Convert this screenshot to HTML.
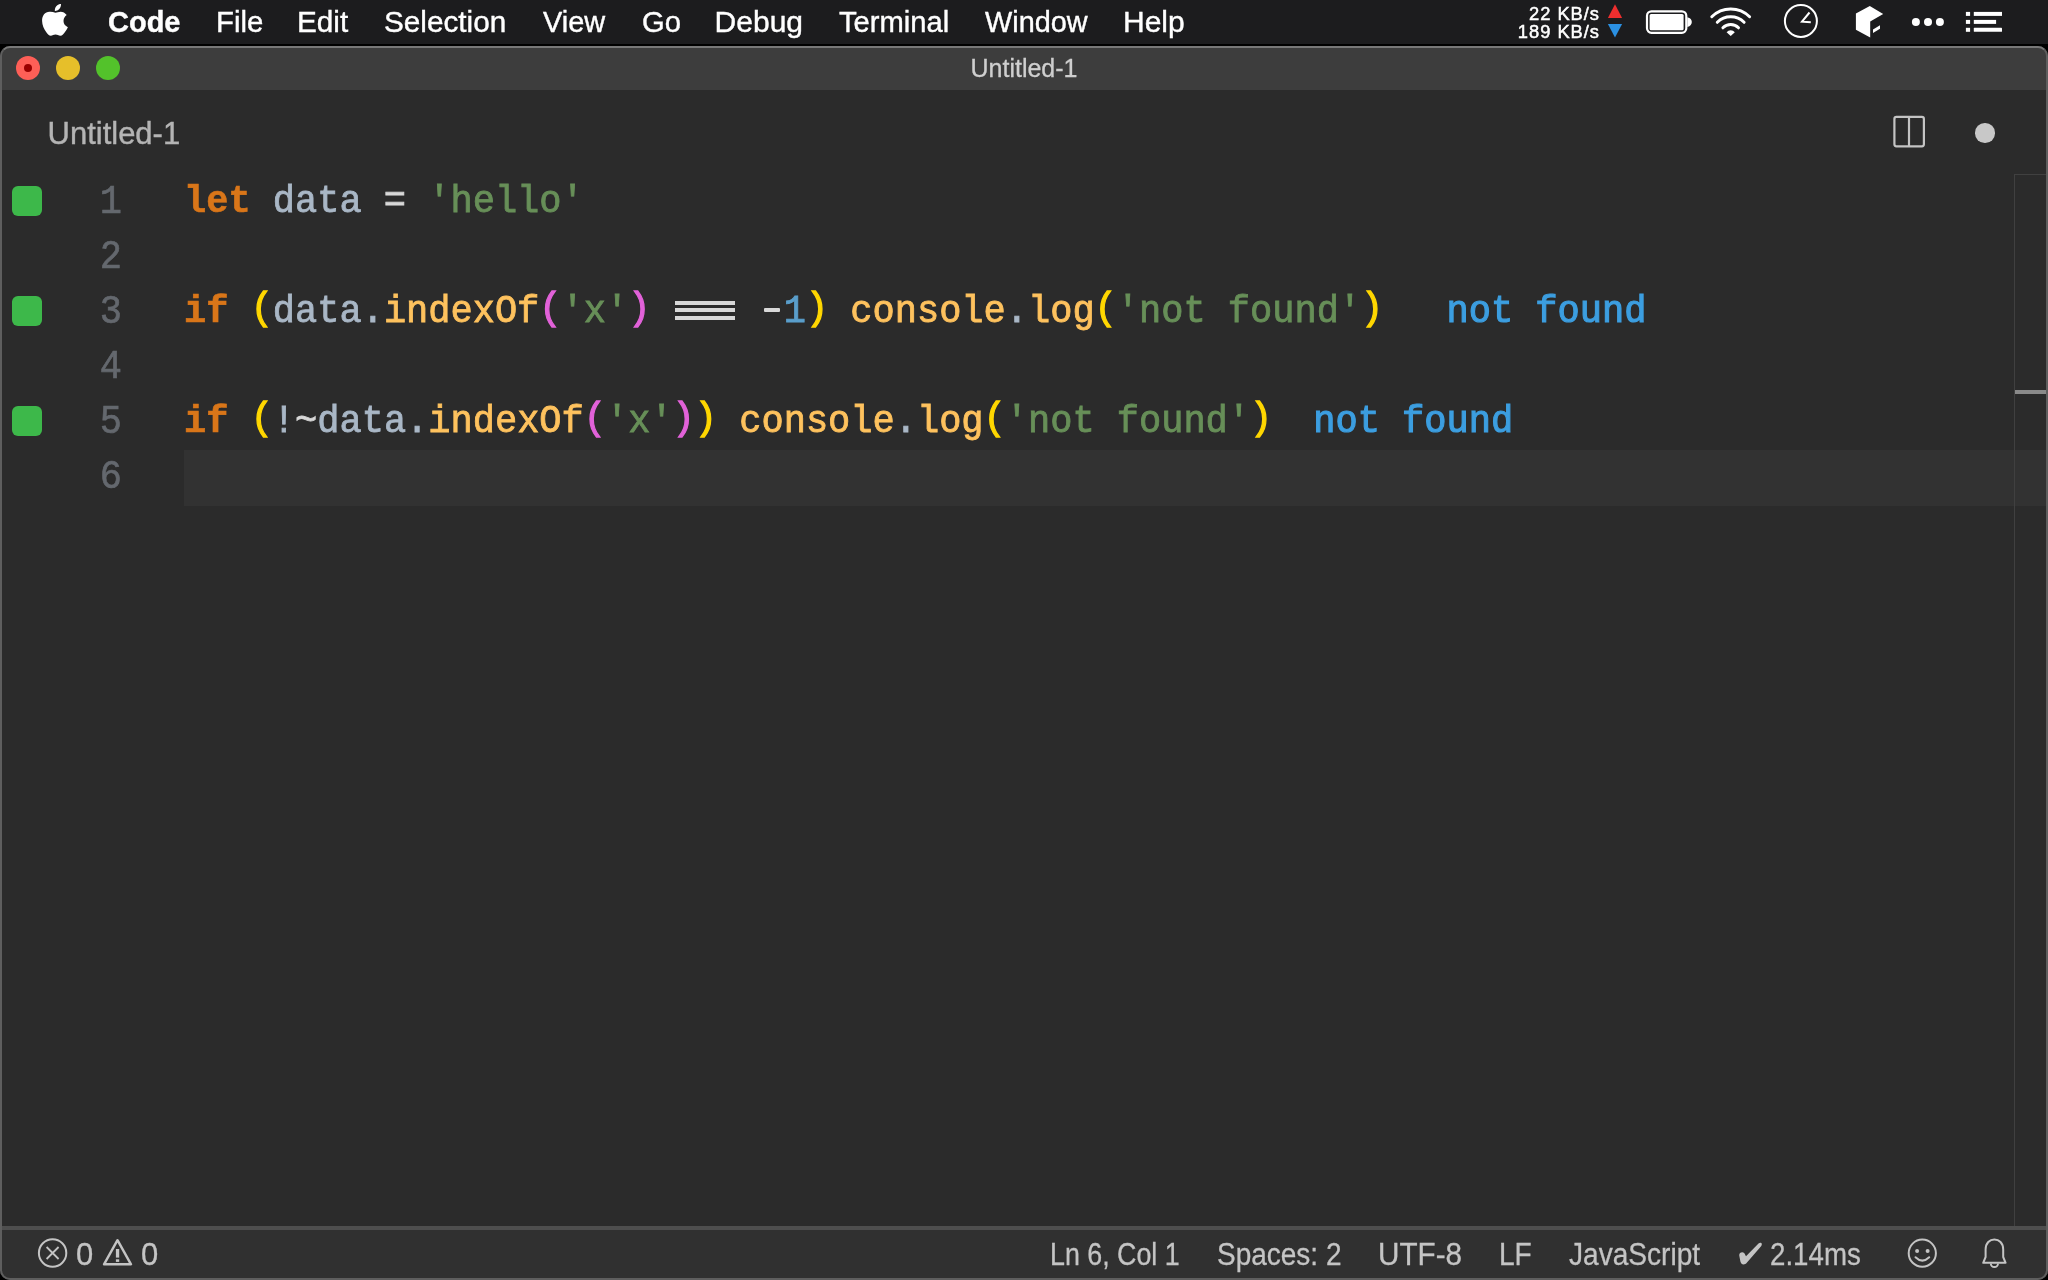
<!DOCTYPE html>
<html><head><meta charset="utf-8">
<style>
html,body{margin:0;padding:0;width:2048px;height:1280px;overflow:hidden;background:#000;}
*{box-sizing:border-box;}
#menubar,#win{will-change:transform;}
svg{position:absolute;overflow:visible;}
#menubar{position:absolute;left:0;top:0;width:2048px;height:44px;background:#1c1c1e;font-family:"Liberation Sans",sans-serif;color:#fff;}
.mi{position:absolute;top:0;height:44px;line-height:44px;font-size:30px;-webkit-text-stroke:0.4px currentColor;white-space:nowrap;transform-origin:0 0;}
.kb{position:absolute;font-size:18.3px;line-height:18px;height:18px;white-space:nowrap;text-align:right;width:91px;letter-spacing:1px;-webkit-text-stroke:0.5px currentColor;}
#win{position:absolute;left:0;top:46px;width:2048px;height:1234px;background:#2b2b2b;border-radius:10px;overflow:hidden;}
#frame{position:absolute;left:0;top:46px;width:2048px;height:1234px;border:2px solid #5e5e5e;border-top-color:#787878;border-radius:10px;}
#titlebar{position:absolute;left:0;top:0;width:2048px;height:44px;background:#3d3d3d;}
.light{position:absolute;width:24px;height:24px;border-radius:50%;top:10px;}
#title{position:absolute;left:0;width:2048px;top:0;height:44px;line-height:44px;text-align:center;font-family:"Liberation Sans",sans-serif;font-size:25px;color:#cfcfcf;-webkit-text-stroke:0.3px currentColor;}
#tab{position:absolute;left:47.5px;top:63px;font-family:"Liberation Sans",sans-serif;font-size:31px;color:#b4b4b4;-webkit-text-stroke:0.4px currentColor;line-height:50px;white-space:nowrap;transform-origin:0 0;}
.code{position:absolute;left:184px;font-family:"Liberation Mono",monospace;font-size:37px;line-height:55px;height:55px;white-space:pre;color:#a9b7c6;-webkit-text-stroke:0.8px currentColor;transform:scaleY(1.06);transform-origin:0 37px;}
.ln{position:absolute;left:60px;width:62px;text-align:right;font-family:"Liberation Mono",monospace;font-size:37px;line-height:55px;height:55px;color:#64686e;-webkit-text-stroke:0.6px currentColor;transform:translateY(1px) scaleY(1.1);transform-origin:0 37px;}
.gs{position:absolute;left:12px;width:30px;height:30px;border-radius:6px;background:#3db84a;}
.kw{color:#d97619;font-weight:bold;-webkit-text-stroke:0.6px currentColor;}
.fn{color:#fec25e;}
.st{color:#678f58;}
.nu{color:#5a9ecb;}
.b1{color:#ffd700;position:relative;top:-2.8px;-webkit-text-stroke:1.2px currentColor;}
.b2{color:#e262d9;position:relative;top:-2.8px;-webkit-text-stroke:1.2px currentColor;}
.op{color:#d8d8d8;}
.res{color:#3c9ee0;position:relative;left:-3.4px;-webkit-text-stroke:1.1px currentColor;}
.lig{color:transparent;-webkit-text-stroke:0 transparent;}
#curline{position:absolute;left:184px;top:404px;width:1864px;height:56px;background:#323232;}
#status{position:absolute;left:0;top:1180px;width:2048px;height:54px;background:#303030;border-top:4px solid #4e4e4e;font-family:"Liberation Sans",sans-serif;color:#c4c4c4;}
.si{position:absolute;top:0;height:50px;line-height:50px;font-size:31px;-webkit-text-stroke:0.3px currentColor;white-space:nowrap;transform-origin:0 0;}
</style></head><body>
<div id="menubar">
  <svg width="40" height="40" style="left:36px;top:0;" viewBox="0 0 40 40"><path fill="#fff" d="M19.4 12.8C17.5 12.0 15.5 11.7 13.5 11.8C9 12 6 15.5 6.1 21C6.2 25 7.8 29 10.5 32.5C11.8 34.3 13 35.8 14.8 35.8C16.5 35.8 17.5 34.6 19.5 34.6C21.5 34.6 22.5 35.8 24.3 35.8C26.3 35.8 27.8 33.8 29 32C30.3 30 31.3 28.5 31.9 27.2C29.2 26 27.5 23.8 27.5 21C27.5 18.3 29 16.3 30.7 15.1C29.2 13 26.8 11.8 24.6 11.8C22.6 11.8 21 12.6 19.4 12.8Z M18.8 10.9C18.7 8.3 19.8 6.5 21.3 5.3C22.4 4.4 23.8 3.9 25 3.9C25.1 6.1 24.3 8 23 9.3C21.8 10.5 20.3 11 18.8 10.9Z"/></svg>
  <div class="mi" style="left:108px;transform:scaleX(0.966);font-weight:bold;">Code</div>
  <div class="mi" style="left:215.5px;transform:scaleX(0.978);">File</div>
  <div class="mi" style="left:296.8px;transform:scaleX(0.99);">Edit</div>
  <div class="mi" style="left:384px;transform:scaleX(0.99);">Selection</div>
  <div class="mi" style="left:543px;transform:scaleX(0.964);">View</div>
  <div class="mi" style="left:642px;transform:scaleX(0.973);">Go</div>
  <div class="mi" style="left:714.6px;transform:scaleX(1.0);">Debug</div>
  <div class="mi" style="left:839px;transform:scaleX(0.973);">Terminal</div>
  <div class="mi" style="left:985px;transform:scaleX(0.962);">Window</div>
  <div class="mi" style="left:1123px;transform:scaleX(1.0);">Help</div>

  <div class="kb" style="left:1509px;top:5px;">22 KB/s</div>
  <div class="kb" style="left:1509px;top:23px;">189 KB/s</div>
  <svg width="20" height="44" style="left:1605px;top:0;" viewBox="0 0 20 44">
    <path fill="#ee2e2e" d="M10 4.2L17.1 18.1H2.9Z"/>
    <path fill="#2b90e2" d="M2.9 23.9H17.1L10 37.6Z"/>
  </svg>
  <svg width="50" height="44" style="left:1644px;top:0;" viewBox="0 0 50 44">
    <rect x="3" y="11.3" width="39.3" height="21.5" rx="4.5" fill="none" stroke="#fff" stroke-width="2.2"/>
    <rect x="5.6" y="13.9" width="34" height="16.3" rx="1.5" fill="#fff"/>
    <path fill="#fff" d="M43.3 17.2C46.5 17.8 47.8 19.8 47.8 22C47.8 24.2 46.5 26.3 43.3 26.9Z"/>
  </svg>
  <svg width="50" height="44" style="left:1705px;top:0;" viewBox="0 0 50 44">
    <g fill="none" stroke="#fff" stroke-width="3" stroke-linecap="round">
      <path d="M6.8 16.7A27 27 0 0 1 44.6 16.7"/>
      <path d="M12.3 22.3A19 19 0 0 1 39.1 22.3"/>
      <path d="M17.9 27.8A11 11 0 0 1 33.5 27.8"/>
    </g>
    <path fill="#fff" d="M21.6 32.3A5.2 5.2 0 0 1 29.8 32.3L25.7 35.9Z"/>
  </svg>
  <svg width="44" height="44" style="left:1779px;top:0;" viewBox="0 0 44 44">
    <circle cx="21.9" cy="21" r="16" fill="none" stroke="#fff" stroke-width="2"/>
    <path d="M30.5 12.5L23 21.7L31.8 22.2" fill="none" stroke="#fff" stroke-width="2"/>
  </svg>
  <svg width="44" height="44" style="left:1850px;top:0;" viewBox="0 0 44 44">
    <path fill="#fff" d="M19.8 6L33.2 13.9L20.2 21.6V37.6L5.9 29.7V13.5Z"/>
    <path fill="#fff" d="M23 29.4L30 25.2V28.8L23 32.9Z"/>
  </svg>
  <svg width="44" height="44" style="left:1904px;top:0;" viewBox="0 0 44 44">
    <circle cx="11.9" cy="22" r="4" fill="#fff"/><circle cx="24" cy="22" r="4" fill="#fff"/><circle cx="35.9" cy="22" r="4" fill="#fff"/>
  </svg>
  <svg width="44" height="44" style="left:1960px;top:0;" viewBox="0 0 44 44">
    <g fill="#fff">
    <rect x="5.9" y="11.9" width="4.2" height="4"/><rect x="5.9" y="19.9" width="4.2" height="4"/><rect x="5.9" y="27.8" width="4.2" height="4"/>
    <rect x="13.8" y="11.9" width="28.2" height="4"/><rect x="13.8" y="19.9" width="22.3" height="4"/><rect x="13.8" y="27.8" width="28.2" height="4" rx="0.6"/>
    </g>
  </svg>
</div>
<div id="win">
  <div id="titlebar">
    <div class="light" style="left:16px;background:#fe5f57;"><div style="position:absolute;left:8px;top:8px;width:8px;height:8px;border-radius:50%;background:#990000;"></div></div>
    <div class="light" style="left:56px;background:#e6bf2a;"></div>
    <div class="light" style="left:96px;background:#53c22b;"></div>
    <div id="title">Untitled-1</div>
  </div>
  <div id="tab">Untitled-1</div>
  <svg width="40" height="40" style="left:1890px;top:66px;" viewBox="0 0 40 40">
    <rect x="4.4" y="4.9" width="29.5" height="29.4" rx="2" fill="none" stroke="#c4c4c4" stroke-width="2.2"/>
    <path d="M19 4.9V34.3" stroke="#c4c4c4" stroke-width="2.2"/>
  </svg>
  <div style="position:absolute;left:1975px;top:77px;width:19.5px;height:19.5px;border-radius:50%;background:#c8c8c8;"></div>

  <div id="curline"></div>
  <div style="position:absolute;left:675px;top:255px;width:60px;height:4px;background:#d8d8d8;"></div>
  <div style="position:absolute;left:675px;top:262px;width:60px;height:4px;background:#d8d8d8;"></div>
  <div style="position:absolute;left:675px;top:269.5px;width:60px;height:4px;background:#d8d8d8;"></div>
  <div style="position:absolute;left:763.5px;top:262px;width:16.3px;height:4.2px;background:#d8d8d8;border-radius:1px;"></div>
  <div style="position:absolute;left:2014px;top:128px;width:1px;height:1052px;background:#404040;"></div>
  <div style="position:absolute;left:2014px;top:128px;width:34px;height:1px;background:#404040;"></div>
  <div style="position:absolute;left:2015px;top:344px;width:33px;height:4px;background:#8a8a8a;"></div>

  <div class="gs" style="top:140px;"></div>
  <div class="gs" style="top:250px;"></div>
  <div class="gs" style="top:360px;"></div>
  <div class="ln" style="top:129px;">1</div>
  <div class="ln" style="top:184px;">2</div>
  <div class="ln" style="top:239px;">3</div>
  <div class="ln" style="top:294px;">4</div>
  <div class="ln" style="top:349px;">5</div>
  <div class="ln" style="top:404px;">6</div>

  <div class="code" style="top:129px;"><span class="kw">let</span> data <span class="op">=</span> <span class="st">'hello'</span></div>
  <div class="code" style="top:239px;"><span class="kw">if</span> <span class="b1">(</span>data.<span class="fn">indexOf</span><span class="b2">(</span><span class="st">'x'</span><span class="b2">)</span> <span class="lig">===</span> <span class="lig">-</span><span class="nu">1</span><span class="b1">)</span> <span class="fn">console</span>.<span class="fn">log</span><span class="b1">(</span><span class="st">'not found'</span><span class="b1">)</span>   <span class="res">not found</span></div>
  <div class="code" style="top:349px;"><span class="kw">if</span> <span class="b1">(</span>!<span class="op">~</span>data.<span class="fn">indexOf</span><span class="b2">(</span><span class="st">'x'</span><span class="b2">)</span><span class="b1">)</span> <span class="fn">console</span>.<span class="fn">log</span><span class="b1">(</span><span class="st">'not found'</span><span class="b1">)</span>  <span class="res">not found</span></div>

  <div id="status">
    <div class="si" style="left:76px;">0</div>
    <div class="si" style="left:141px;">0</div>
    <div class="si" style="left:1050px;transform:scaleX(0.865);">Ln 6, Col 1</div>
    <div class="si" style="left:1217px;transform:scaleX(0.903);">Spaces: 2</div>
    <div class="si" style="left:1378px;transform:scaleX(0.957);">UTF-8</div>
    <div class="si" style="left:1499px;transform:scaleX(0.906);">LF</div>
    <div class="si" style="left:1569px;transform:scaleX(0.906);">JavaScript</div>
    <div class="si" style="left:1770px;transform:scaleX(0.893);">2.14ms</div>
  </div>
</div>
<div id="frame"></div>
<svg width="2048" height="1280" style="left:0;top:0;" viewBox="0 0 2048 1280">
  <g fill="none" stroke="#c4c4c4">
    <circle cx="52.6" cy="1253" r="13.7" stroke-width="2"/>
    <path d="M46.6 1247L58.6 1259M58.6 1247L46.6 1259" stroke-width="1.8"/>
    <path d="M117.5 1240.2L131 1264.3H104Z" stroke-width="2.4" stroke-linejoin="round"/>
    <circle cx="1922.3" cy="1253.2" r="13.6" stroke-width="2"/>
    <path d="M1915.5 1257.3Q1922.3 1264 1929.2 1257.3" stroke-width="2" stroke-linecap="round"/>
    <path d="M1983.2 1262.8H2005.6L2003.2 1257V1249.5C2003.2 1243 1999 1239.4 1994.4 1239.4C1989.8 1239.4 1985.6 1243 1985.6 1249.5V1257Z" stroke-width="2" stroke-linejoin="round"/>
    <path d="M1990.8 1263.5A3.6 3.6 0 0 0 1998 1263.5" stroke-width="2"/>
  </g>
  <g fill="#c4c4c4">
    <rect x="115.9" y="1249" width="3.3" height="8.6"/>
    <rect x="115.9" y="1259.3" width="3.3" height="2.6"/>
    <circle cx="1917.1" cy="1251.1" r="2"/>
    <circle cx="1927.6" cy="1251.1" r="2"/>
    <path d="M1739.2 1255.3C1739.2 1253.5 1740.5 1252.3 1742.2 1252.3C1743.8 1252.3 1744.6 1253.3 1745.3 1255L1746 1256.3L1758.5 1243.5C1759.5 1242.6 1760.5 1242.5 1761.3 1243C1762 1243.6 1762 1244.8 1761.3 1246L1747 1262.5C1745.8 1264 1744.8 1264.4 1743.5 1264.4C1742 1264.4 1741 1263.5 1740.4 1261.5Z"/>
  </g>
</svg>

</body></html>
